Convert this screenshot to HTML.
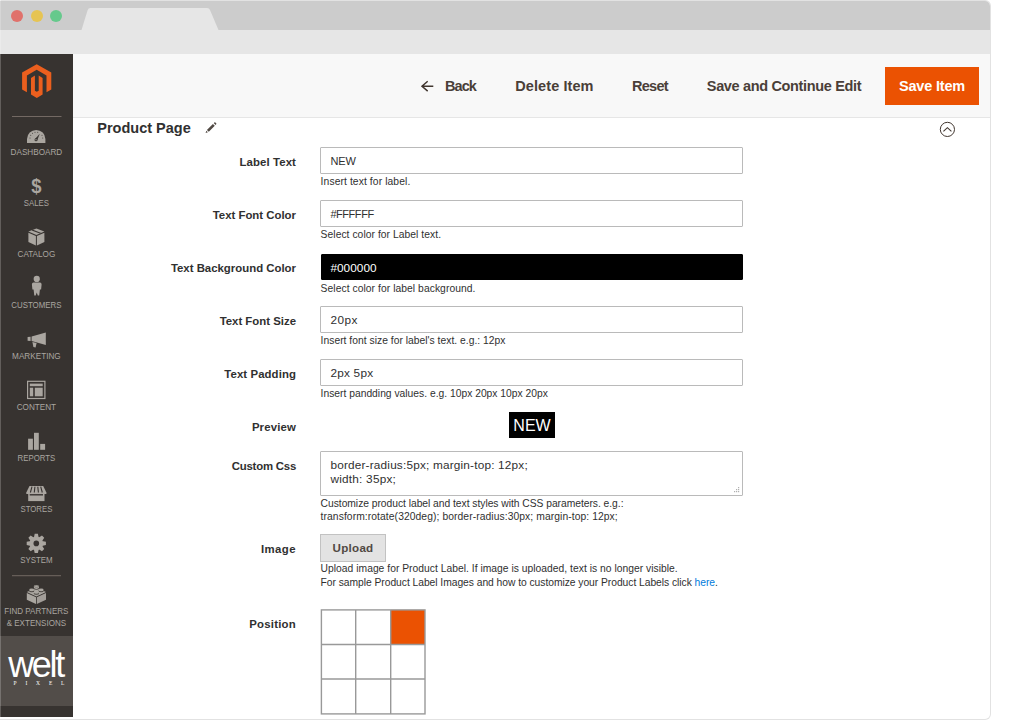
<!DOCTYPE html>
<html lang="en">
<head>
<meta charset="utf-8">
<title>Product Page</title>
<style>
*{box-sizing:border-box;margin:0;padding:0}
html,body{width:1015px;height:721px;background:#fff;overflow:hidden}
body{font-family:"Liberation Sans",sans-serif;color:#303030;position:relative}
.win{position:absolute;left:0;top:0;width:991px;height:720px;border:1px solid #e2e2e2;border-left-color:transparent;border-radius:0 6px 6px 0;overflow:hidden;background:linear-gradient(to bottom,#e2e2e2 0,#e2e2e2 1px,#d6d6d6 1px,#d6d6d6 30px,#ebebeb 30px,#ebebeb 54px,#625e5b 54px,#625e5b 636px,#76726f 636px,#76726f 706px,#625e5b 706px,#625e5b 717px,#fff 717px,#fff 719px,#e2e2e2 719px) 0 0/1px 100% no-repeat border-box,#fff}
.abs{position:absolute}
.titlebar{position:absolute;left:0;top:0;width:100%;height:29px;background:#cccccc}
.strip{position:absolute;left:0;top:29px;width:100%;height:24px;background:#e6e6e6}
.dot{position:absolute;top:9px;width:12px;height:12px;border-radius:50%}
.sidebar{position:absolute;left:0;top:53px;width:72px;height:663px;background:#373330}
.header{position:absolute;left:72px;top:53px;right:0;height:64px;background:#f8f8f8;border-bottom:1px solid #e6e6e6}
.hbtn{position:absolute;top:22.4px;font-weight:700;font-size:14.5px;line-height:20px;color:#4a3f38;white-space:nowrap}
.save{position:absolute;left:812px;top:13px;width:94px;height:38px;background:#eb5202;color:#fff;font-weight:700;font-size:14.5px;line-height:38.8px;text-align:center;letter-spacing:-.2px;white-space:nowrap}
.nav{position:absolute;left:0;width:70.8px;text-align:center;font-size:8.6px;line-height:10px;color:#aaa6a0;white-space:nowrap}
.nav svg{position:absolute}
.lbl{position:absolute;right:694px;font-weight:700;font-size:11.4px;line-height:14px;color:#303030;white-space:nowrap;text-align:right}
.inp{position:absolute;left:319px;width:423px;height:27px;border:1px solid #bababa;border-radius:1px;background:#fff;font-size:11.8px;line-height:27px;padding-left:9.4px;color:#303030;white-space:nowrap}
.help{position:absolute;left:319.6px;margin-top:1px;font-size:10.3px;line-height:13.5px;color:#303030;white-space:nowrap}
.welt{position:absolute;left:0;top:582px;width:72px;height:70px;background:#524d49;color:#fff}
.w1{position:absolute;left:7.2px;top:9.2px;font-size:36px;line-height:40px;letter-spacing:-2.33px;white-space:nowrap}
.w2{position:absolute;left:12.5px;top:44px;font-family:"Liberation Serif",serif;font-size:5.5px;line-height:7px;letter-spacing:8.85px;white-space:nowrap}
.main{position:absolute;left:0;top:0;width:989px;height:718px}
.title{position:absolute;left:96.3px;top:117.7px;font-weight:700;font-size:14.5px;line-height:18px;color:#303030;white-space:nowrap}
.preview{position:absolute;left:508px;top:411px;width:46px;height:26px;background:#000;color:#fff;font-size:16px;line-height:26px;padding-top:1.4px;text-align:center}
.ta{height:45px;line-height:14.4px;padding-top:5.6px;white-space:nowrap}
.upload{position:absolute;left:319px;top:533px;width:66px;height:28px;background:#e3e3e3;border:1px solid #c2c2c2;font-weight:700;font-size:11.6px;line-height:25px;text-align:center;color:#514943;letter-spacing:.28px}
a{color:#007bdb;text-decoration:none}
</style>
</head>
<body>
<div class="win">
  <div class="titlebar"></div>
  <div class="strip"></div>
  <svg class="abs" style="left:0;top:0" width="300" height="30" viewBox="0 0 300 30"><path d="M80.5 29 L86.6 9.2 Q87.3 7 89.5 7 L206 7 Q208.3 7 209 9 L217.5 29 Z" fill="#e6e6e6"/></svg>
  <div class="dot" style="left:10px;background:#e0716b"></div>
  <div class="dot" style="left:29.5px;background:#e6c453"></div>
  <div class="dot" style="left:49px;background:#66c98c"></div>

  <div class="sidebar" id="sidebar">
    <svg class="abs" style="left:0;top:0" width="72" height="663" viewBox="1 54 72 663">
      <!-- magento logo -->
      <g transform="translate(22.1 64.2)" fill="#eb5f1e">
        <path d="M14.6 0 L29.2 8.4 L29.2 25.3 L24.4 28.1 L24.4 11.2 L14.6 5.6 L4.8 11.2 L4.8 28.1 L0 25.3 L0 8.4 Z"/>
        <path d="M8.9 13.7 L12.8 11.4 L12.8 26.5 L14.7 27.6 L16.6 26.5 L16.6 11.4 L20.5 13.7 L20.5 30.4 L14.7 33.7 L8.9 30.4 Z"/>
      </g>
      <rect x="12" y="116" width="49.5" height="1" fill="#736963"/>
      <!-- dashboard -->
      <g transform="translate(26.8 129.7)">
        <path d="M0.2 13.2 L0.2 9.4 A9.2 9.2 0 0 1 18.6 9.4 L18.6 13.2 Z" fill="#aaa6a0"/>
        <path d="M8.2 9.3 L13 4.1 L10.3 10.8 Z" fill="#373330"/>
        <circle cx="9.2" cy="10" r="1.5" fill="#373330"/>
        <circle cx="9.2" cy="10" r="0.6" fill="#aaa6a0"/>
        <g fill="#4a4541"><circle cx="3.2" cy="8.3" r=".55"/><circle cx="3.9" cy="5.5" r=".55"/><circle cx="5.7" cy="3.5" r=".55"/><circle cx="8.2" cy="2.5" r=".55"/><circle cx="10.9" cy="2.5" r=".55"/><circle cx="15.2" cy="5.5" r=".55"/><circle cx="15.9" cy="8.3" r=".55"/></g>
      </g>
      <!-- catalog box -->
      <g transform="translate(28.4 228.6)" fill="#aaa6a0">
        <path d="M8 0 L16 3 L8 6.4 L0 3 Z"/>
        <path d="M0 4.2 L7.5 7.4 L7.5 16.8 L0 13.4 Z"/>
        <path d="M16 4.2 L8.5 7.4 L8.5 16.8 L16 13.4 Z"/>
        <path d="M4.6 1.2 L12.9 4.4 L11.4 5 L3.2 1.8 Z" fill="#373330"/>
      </g>
      <!-- customers -->
      <g transform="translate(31.9 275.8)" fill="#aaa6a0">
        <circle cx="4.85" cy="3.1" r="3.1"/>
        <path d="M1.6 6.8 L8.1 6.8 Q9.7 6.8 9.7 8.6 L9.2 13.6 L8 13.6 L7.3 19.8 L5.9 19.8 L4.85 16.6 L3.8 19.8 L2.4 19.8 L1.7 13.6 L0.5 13.6 L0 8.6 Q0 6.8 1.6 6.8 Z"/>
      </g>
      <!-- marketing -->
      <g transform="translate(27 332.5)" fill="#aaa6a0">
        <path d="M18.8 0 L18.8 12.4 L4.6 8.6 L4.6 3.9 Z"/>
        <path d="M0.6 4.4 L3.6 4.2 L3.6 8.4 L0.6 8.2 Z"/>
        <path d="M5.4 9.4 L9.6 10.6 L8.6 15 L6.4 14.4 Z"/>
      </g>
      <!-- content -->
      <g transform="translate(27 380.7)">
        <rect x=".6" y=".6" width="17.3" height="17.2" fill="none" stroke="#aaa6a0" stroke-width="1.2"/>
        <rect x="2.8" y="2.9" width="12.9" height="2.6" fill="#aaa6a0"/>
        <rect x="2.8" y="7" width="3.4" height="8.6" fill="#aaa6a0"/>
        <rect x="7.8" y="7" width="7.9" height="8.6" fill="#aaa6a0"/>
      </g>
      <!-- reports -->
      <g fill="#aaa6a0">
        <rect x="28.1" y="438.7" width="4.8" height="11.1"/>
        <rect x="34" y="432.8" width="4.8" height="17"/>
        <rect x="40.2" y="443.9" width="4.9" height="5.9"/>
      </g>
      <!-- stores -->
      <g transform="translate(26.3 485.9)" fill="#aaa6a0">
        <path d="M3.2 0 L16.9 0 L20.1 6.6 L20.1 8 L0 8 L0 6.6 Z"/>
        <path d="M1.9 8 L18.2 8 L18.2 15.2 L1.9 15.2 Z"/>
        <g stroke="#373330" stroke-width="1.1" fill="none"><path d="M5.7 .8 L4.1 6.6"/><path d="M8.6 .8 L8 6.6"/><path d="M11.5 .8 L12.1 6.6"/><path d="M14.4 .8 L16 6.6"/></g>
        <rect x="3.4" y="8.2" width="13.3" height="1.4" fill="#373330"/>
      </g>
      <!-- system gear -->
      <g transform="translate(36.3 543.4)" fill="#aaa6a0">
        <path d="M-2.50 -5.50 L-1.60 -9.60 L1.60 -9.60 L2.50 -5.50 Z M2.12 -5.66 L5.66 -7.92 L7.92 -5.66 L5.66 -2.12 Z M5.50 -2.50 L9.60 -1.60 L9.60 1.60 L5.50 2.50 Z M5.66 2.12 L7.92 5.66 L5.66 7.92 L2.12 5.66 Z M2.50 5.50 L1.60 9.60 L-1.60 9.60 L-2.50 5.50 Z M-2.12 5.66 L-5.66 7.92 L-7.92 5.66 L-5.66 2.12 Z M-5.50 2.50 L-9.60 1.60 L-9.60 -1.60 L-5.50 -2.50 Z M-5.66 -2.12 L-7.92 -5.66 L-5.66 -7.92 L-2.12 -5.66 Z"/>
        <circle r="6.7"/>
        <circle r="2.8" fill="#373330"/>
      </g>
      <rect x="12" y="575.2" width="49" height="1" fill="#736963"/>
      <!-- partners brick -->
      <g transform="translate(26.8 584.9)" fill="#aaa6a0">
        <path d="M9.6 3.2 L19.2 7.2 L9.6 11.6 L0 7.2 Z"/>
        <path d="M0 8 L9.2 12.3 L9.2 19 L0 14.8 Z"/>
        <path d="M19.2 8 L10 12.3 L10 19 L19.2 14.8 Z" fill="#a29d98"/>
        <g fill="#4a4541"><ellipse cx="9.6" cy="3.3" rx="2.7" ry="1.5"/><ellipse cx="4.9" cy="5.9" rx="2.7" ry="1.5"/><ellipse cx="14.3" cy="5.9" rx="2.7" ry="1.5"/><ellipse cx="9.6" cy="8.4" rx="2.7" ry="1.5"/></g>
        <g><rect x="7.1" y="1.5" width="5" height="1.3"/><ellipse cx="9.6" cy="1.5" rx="2.5" ry="1.4"/><ellipse cx="9.6" cy="2.7" rx="2.5" ry="1.4"/>
        <ellipse cx="4.9" cy="5" rx="2.5" ry="1.4"/><ellipse cx="14.3" cy="5" rx="2.5" ry="1.4"/><ellipse cx="9.6" cy="7.5" rx="2.5" ry="1.4"/></g>
        <g fill="none" stroke="#6b6661" stroke-width=".5"><ellipse cx="9.6" cy="1.5" rx="2.1" ry="1"/></g>
      </g>
    </svg>
    <div class="nav" style="top:93px;transform:scaleX(0.949)">DASHBOARD</div>
    <div class="nav" style="top:120px;font-size:20.5px;line-height:24px;font-weight:700;transform:scaleX(.9)">$</div>
    <div class="nav" style="top:144px;transform:scaleX(0.908)">SALES</div>
    <div class="nav" style="top:195px;transform:scaleX(0.949)">CATALOG</div>
    <div class="nav" style="top:246px;transform:scaleX(0.917)">CUSTOMERS</div>
    <div class="nav" style="top:297px;transform:scaleX(0.95)">MARKETING</div>
    <div class="nav" style="top:348px;transform:scaleX(0.949)">CONTENT</div>
    <div class="nav" style="top:399px;transform:scaleX(0.91)">REPORTS</div>
    <div class="nav" style="top:450px;transform:scaleX(0.906)">STORES</div>
    <div class="nav" style="top:501px;transform:scaleX(0.918)">SYSTEM</div>
    <div class="nav" style="top:551px;line-height:12.2px;transform:scaleX(.937)">FIND PARTNERS<br>&amp; EXTENSIONS</div>
    <div class="welt">
      <div class="w1">welt</div>
      <div class="w2">PIXEL</div>
    </div>
  </div>

  <div class="header">
    <div class="hbtn" style="left:372px;letter-spacing:-.95px">Back</div>
    <div class="hbtn" style="left:442.3px;letter-spacing:.08px">Delete Item</div>
    <div class="hbtn" style="left:559px;letter-spacing:-.72px">Reset</div>
    <div class="hbtn" style="left:633.8px;letter-spacing:-.34px">Save and Continue Edit</div>
    <div class="save">Save Item</div>
  </div>

  <div class="main">
    <svg class="abs" style="left:419px;top:79px" width="16" height="14" viewBox="420 80 16 14"><path d="M433.3 86.2 H422.2 M427.7 81.3 L422 86.2 L427.7 91.1" fill="none" stroke="#41362f" stroke-width="1.5"/></svg>
    <div class="title">Product Page</div>
    <svg class="abs" style="left:204px;top:121px" width="13" height="12" viewBox="0 0 13 12"><path d="M0.6 10.9 L1.3 8.7 L2.9 10.3 Z M1.9 7.9 L7.9 1.9 L9.8 3.8 L3.8 9.8 Z M8.7 1.1 L9.4 0.4 Q9.9 0 10.4 0.5 L11.2 1.3 Q11.6 1.8 11.2 2.3 L10.5 3 Z" fill="#514943"/></svg>
    <svg class="abs" style="left:938px;top:120px" width="17" height="17" viewBox="0 0 17 17"><circle cx="8.4" cy="8.4" r="7.1" fill="none" stroke="#41362f" stroke-width="1"/><path d="M4.4 10.3 L8.4 6.7 L12.4 10.3" fill="none" stroke="#41362f" stroke-width="1.1"/></svg>

    <div class="lbl" style="top:154px;letter-spacing:.1px">Label Text</div>
    <div class="inp" style="top:146px;font-size:11px;letter-spacing:-.1px">NEW</div>
    <div class="help" style="top:173px;letter-spacing:.1px">Insert text for label.</div>

    <div class="lbl" style="top:207px">Text Font Color</div>
    <div class="inp" style="top:199px;font-size:11px;letter-spacing:-.45px">#FFFFFF</div>
    <div class="help" style="top:226px;letter-spacing:.05px">Select color for Label text.</div>

    <div class="lbl" style="top:260px">Text Background Color</div>
    <div class="inp" style="top:253px;left:320px;width:422px;padding-left:8.4px;height:26px;background:#000;border-color:#000;color:#fff;line-height:26px;letter-spacing:.05px">#000000</div>
    <div class="help" style="top:280px;letter-spacing:.06px">Select color for label background.</div>

    <div class="lbl" style="top:313px">Text Font Size</div>
    <div class="inp" style="top:305px;letter-spacing:.46px">20px</div>
    <div class="help" style="top:332px;letter-spacing:.02px">Insert font size for label's text. e.g.: 12px</div>

    <div class="lbl" style="top:366px;letter-spacing:.09px">Text Padding</div>
    <div class="inp" style="top:358px;letter-spacing:.23px">2px 5px</div>
    <div class="help" style="top:385px">Insert pandding values. e.g. 10px 20px 10px 20px</div>

    <div class="lbl" style="top:419px;letter-spacing:.15px">Preview</div>
    <div class="preview">NEW</div>

    <div class="lbl" style="top:458px;letter-spacing:-.22px">Custom Css</div>
    <div class="inp ta" style="top:450px;letter-spacing:.23px"><span style="letter-spacing:.185px">border-radius:5px; margin-top: 12px;</span><br>width: 35px;
      <svg class="abs" style="right:2px;bottom:2px" width="6" height="6" viewBox="0 0 6 6"><g fill="#b0b0b0"><rect x="4" y="0" width="1.2" height="1.2"/><rect x="2" y="2" width="1.2" height="1.2"/><rect x="4" y="2" width="1.2" height="1.2"/><rect x="0" y="4" width="1.2" height="1.2"/><rect x="2" y="4" width="1.2" height="1.2"/><rect x="4" y="4" width="1.2" height="1.2"/></g></svg>
    </div>
    <div class="help" style="top:495px;line-height:13.3px"><span style="letter-spacing:-.033px">Customize product label and text styles with CSS parameters. e.g.:</span><br><span style="letter-spacing:.084px">transform:rotate(320deg); border-radius:30px; margin-top: 12px;</span></div>

    <div class="lbl" style="top:541px;letter-spacing:.42px">Image</div>
    <div class="upload">Upload</div>
    <div class="help" style="top:560px;line-height:13.8px;letter-spacing:.02px">Upload image for Product Label. If image is uploaded, text is no longer visible.<br><span style="letter-spacing:-.04px">For sample Product Label Images and how to customize your Product Labels click <a>here</a>.</span></div>

    <div class="lbl" style="top:616px;letter-spacing:.24px">Position</div>
    <svg class="abs" style="left:318px;top:607px" width="110" height="110" viewBox="319 608 110 110">
      <rect x="390.7" y="609.9" width="34.3" height="34.6" fill="#eb5202"/>
      <g fill="none" stroke="#999" stroke-width="1.4">
        <rect x="321.4" y="609.9" width="103.6" height="104"/>
        <path d="M355.7 609.9 V713.9 M390.7 609.9 V713.9 M321.4 644.5 H425 M321.4 679 H425"/>
      </g>
    </svg>
  </div>
</div>
</body>
</html>
